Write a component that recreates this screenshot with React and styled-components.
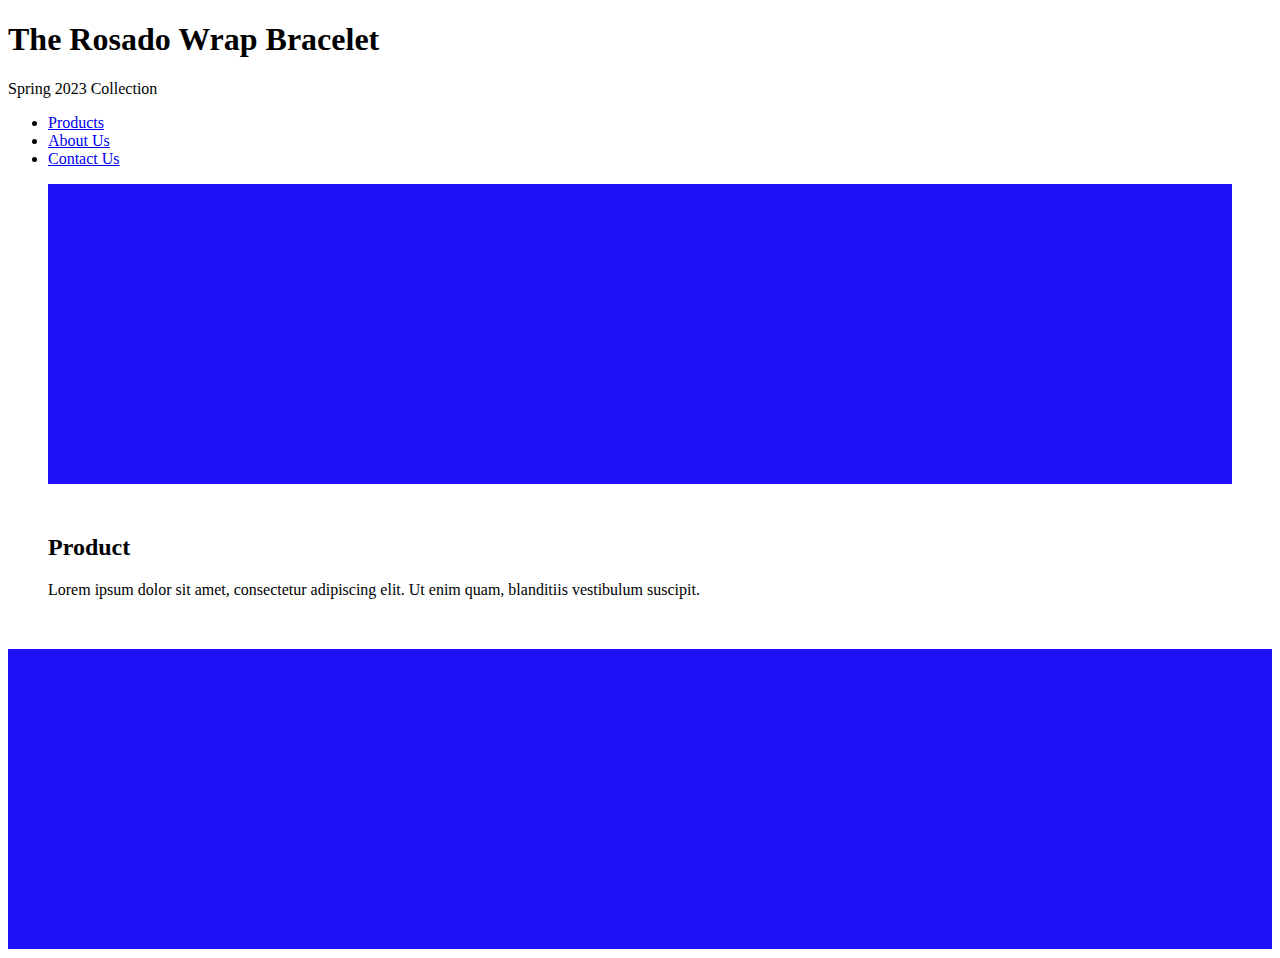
import React from "react";
import styled, { createGlobalStyle } from "styled-components";

const GlobalStyle = createGlobalStyle`
  body {
    margin: 0 8px 8px;
    font-family: "Liberation Serif", "Times New Roman", serif;
    font-size: 16px;
    color: #000;
    background: #fff;
  }
`;

const Header = styled.header``;

const Title = styled.h1`
  font-size: 32px;
  font-weight: bold;
  margin: 21.44px 0;
`;

const Subtitle = styled.p`
  margin: 16px 0;
`;

const NavList = styled.ul`
  margin: 16px 0;
  padding-left: 40px;
  list-style: disc;
`;

const NavLink = styled.a`
  color: #0000ee;
  text-decoration: underline;
`;

const Hero = styled.div`
  margin: 0 40px;
  height: 300px;
  background: #1f12f8;
`;

const Product = styled.section`
  padding: 50px 40px;
`;

const ProductTitle = styled.h2`
  font-size: 24px;
  font-weight: bold;
  margin: 0 0 19.92px;
`;

const ProductText = styled.p`
  margin: 0;
`;

const Footer = styled.footer`
  height: 300px;
  background: #1f12f8;
`;

export default function App() {
  return (
    <>
      <GlobalStyle />
      <Header>
        <Title>The Rosado Wrap Bracelet</Title>
        <Subtitle>Spring 2023 Collection</Subtitle>
        <nav>
          <NavList>
            <li><NavLink href="#">Products</NavLink></li>
            <li><NavLink href="#">About Us</NavLink></li>
            <li><NavLink href="#">Contact Us</NavLink></li>
          </NavList>
        </nav>
      </Header>
      <main>
        <Hero />
        <Product>
          <ProductTitle>Product</ProductTitle>
          <ProductText>
            Lorem ipsum dolor sit amet, consectetur adipiscing elit. Ut enim quam, blanditiis vestibulum suscipit.
          </ProductText>
        </Product>
      </main>
      <Footer />
    </>
  );
}
